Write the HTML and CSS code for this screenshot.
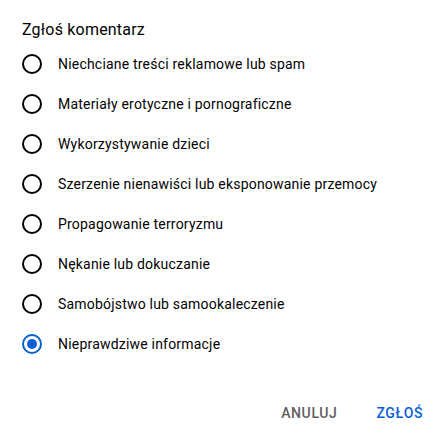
FILE: index.html
```html
<!DOCTYPE html>
<html lang="pl">
<head>
<meta charset="utf-8">
<link rel="stylesheet" href="styles.css">
</head>
<body>
<div class="dialog">
  <div class="title">Zgłoś komentarz</div>
  <div class="options">
    <label class="option"><span class="radio"></span><span class="label">Niechciane treści reklamowe lub spam</span></label>
    <label class="option"><span class="radio"></span><span class="label">Materiały erotyczne i pornograficzne</span></label>
    <label class="option"><span class="radio"></span><span class="label">Wykorzystywanie dzieci</span></label>
    <label class="option"><span class="radio"></span><span class="label">Szerzenie nienawiści lub eksponowanie przemocy</span></label>
    <label class="option"><span class="radio"></span><span class="label">Propagowanie terroryzmu</span></label>
    <label class="option"><span class="radio"></span><span class="label">Nękanie lub dokuczanie</span></label>
    <label class="option"><span class="radio"></span><span class="label">Samobójstwo lub samookaleczenie</span></label>
    <label class="option"><span class="radio checked"></span><span class="label">Nieprawdziwe informacje</span></label>
  </div>
  <div class="actions">
    <button class="btn cancel">Anuluj</button>
    <button class="btn submit">Zgłoś</button>
  </div>
</div>
</body>
</html>
```
FILE: styles.css
```css
html, body {
  margin: 0;
  padding: 0;
  background: #fff;
}
body {
  font-family: Roboto, "Liberation Sans", sans-serif;
  color: #030303;
}
.dialog {
  width: 447px;
  height: 443px;
  box-sizing: border-box;
  padding: 18px 8px 0 22px;
  display: flex;
  flex-direction: column;
}
.title {
  font-size: 16px;
  line-height: 24px;
  font-weight: 400;
  letter-spacing: 0.2px;
}
.options {
  margin-top: 2px;
  display: flex;
  flex-direction: column;
}
.option {
  height: 40px;
  display: flex;
  align-items: center;
}
.radio {
  width: 20px;
  height: 20px;
  box-sizing: border-box;
  border: 2px solid #030303;
  border-radius: 50%;
  flex: none;
  display: flex;
  align-items: center;
  justify-content: center;
}
.radio.checked {
  border-color: #065fd4;
}
.radio.checked::after {
  content: "";
  width: 10px;
  height: 10px;
  border-radius: 50%;
  background: #065fd4;
}
.label {
  margin-left: 16px;
  font-size: 14px;
  line-height: 20px;
  letter-spacing: 0.2px;
}
.actions {
  margin-top: 31px;
  display: flex;
  justify-content: flex-end;
  gap: 7px;
}
.btn {
  height: 36px;
  padding: 0 16px;
  border: none;
  background: transparent;
  font-family: Roboto, "Liberation Sans", sans-serif;
  font-size: 14px;
  font-weight: 500;
  text-transform: uppercase;
  letter-spacing: 0.6px;
  cursor: pointer;
}
.cancel { color: #606060; }
.submit { color: #065fd4; }
```
